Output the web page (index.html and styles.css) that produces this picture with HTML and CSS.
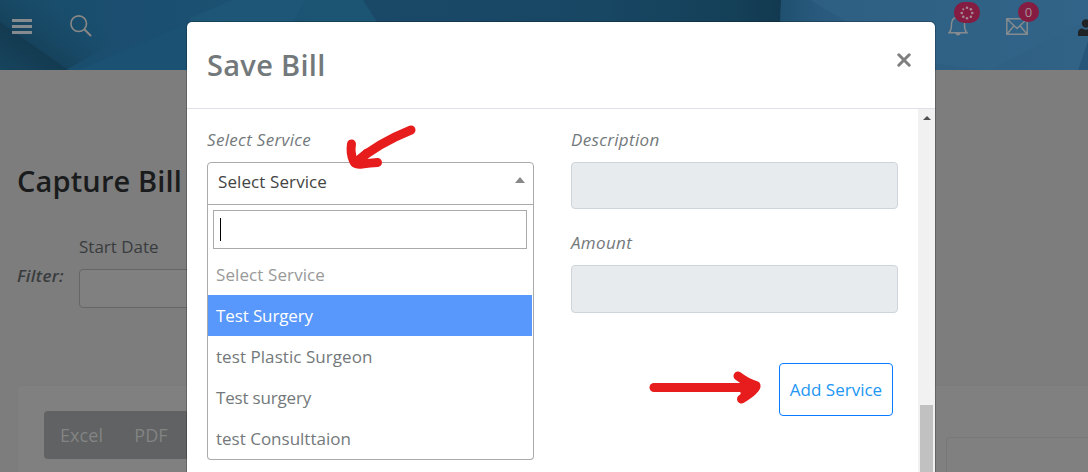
FILE: index.html
```html
<!DOCTYPE html>
<html lang="en">
<head>
<meta charset="utf-8">
<title>Capture Bill</title>
<link rel="stylesheet" href="styles.css">
</head>
<body>
<div class="page">
  <header class="topbar">
    <svg class="topbar-art" viewBox="0 0 1088 70" preserveAspectRatio="none" aria-hidden="true">
      <defs>
        <linearGradient id="base" x1="0" x2="1" y1="0" y2="0">
          <stop offset="0" stop-color="#184d69"/><stop offset=".12" stop-color="#1b4e70"/><stop offset=".3" stop-color="#1c5474"/>
        </linearGradient>
        <linearGradient id="fold" gradientUnits="userSpaceOnUse" x1="32" y1="44" x2="8" y2="80">
          <stop offset="0" stop-color="#133a50"/><stop offset="1" stop-color="#17465f"/>
        </linearGradient>
        <linearGradient id="soft" gradientUnits="userSpaceOnUse" x1="32" y1="44" x2="64" y2="0">
          <stop offset="0" stop-color="#153f58" stop-opacity=".8"/><stop offset="1" stop-color="#184d69" stop-opacity="0"/>
        </linearGradient>
        <linearGradient id="mid" x1="0" x2="1" y1="0" y2="0">
          <stop offset="0" stop-color="#1a4867"/><stop offset=".55" stop-color="#184764"/><stop offset=".9" stop-color="#143f57"/><stop offset="1" stop-color="#123950"/>
        </linearGradient>
        <linearGradient id="right" x1="0" x2="1" y1="0" y2="0">
          <stop offset="0" stop-color="#20506f"/><stop offset=".15" stop-color="#2a5b7f"/><stop offset="1" stop-color="#316387"/>
        </linearGradient>
      </defs>
      <rect width="1088" height="70" fill="url(#base)"/>
      <path d="M0 0H190L66 70L0 22Z" fill="url(#soft)"/>
      <path d="M0 22L68 70H0Z" fill="url(#fold)"/>
      <path d="M80 70L190 22V70Z" fill="#1b5273"/>
      <path d="M190 18L232 0H306L285 35H187Z" fill="#1e5877" opacity=".7"/>
      <path d="M363 0H781L779 70H407Z" fill="url(#mid)"/>
      <path d="M781 0H1088V70H779Z" fill="url(#right)"/>
      <path d="M810 0H1088V20L990 70L935 64L850 24Z" fill="#32658a" opacity=".45"/>
      <path d="M1088 41V70H1078Z" fill="#26577a"/>
    </svg>
    <div class="topbar-content">
      <svg class="menu-icon" viewBox="0 0 20 15"><path d="M0 1.5H20M0 7.5H20M0 13.5H20" stroke="#858b8e" stroke-width="3"/></svg>
      <svg class="search-icon" viewBox="0 0 22 22"><g fill="none" stroke="#8a8886" stroke-width="1.6"><circle cx="8.7" cy="8.7" r="7.8"/><path d="M14 14L21 21" stroke-width="2"/></g></svg>
      <span class="spacer"></span>
      <div class="notice bell">
        <svg viewBox="0 0 20 20"><path d="M1 16.8C4 14 3.3 11 3.5 7.5C3.8 3.5 6.4 1.2 10 1.2S16.2 3.5 16.5 7.5C16.7 11 16 14 19 16.8Z" fill="none" stroke="#858b8e" stroke-width="1.5"/><path d="M7.2 17H12.8Q12 19.6 10 19.6T7.2 17" fill="#858b8e"/></svg>
        <span class="badge wide"><svg viewBox="0 0 16 16"><g fill="#a68791"><circle cx="8" cy="2" r="1.5"/><circle cx="12.4" cy="3.8" r="1.5"/><circle cx="14" cy="8" r="1.5"/><circle cx="12.4" cy="12.3" r="1.5"/><circle cx="8" cy="14" r="1.5"/><circle cx="3.7" cy="12.3" r="1.5"/><circle cx="2" cy="8" r="1.5"/><circle cx="3.7" cy="3.8" r="1.2"/></g></svg></span>
      </div>
      <div class="notice mail">
        <svg viewBox="0 0 22 17"><path d="M.8 .8H21.2V16.2H.8ZM1 1L11 10.5L21 1M1 16L8 7.7M21 16L14 7.7" fill="none" stroke="#858b8e" stroke-width="1.5"/></svg>
        <span class="badge">0</span>
      </div>
      <svg class="user-icon" viewBox="0 0 16 18"><circle cx="8" cy="4.5" r="4.2" fill="#202326"/><path d="M0 17V14Q0 9.5 4.5 9.5Q8 12 11.5 9.5Q16 9.5 16 14V17Z" fill="#202326"/></svg>
    </div>
  </header>
  <main class="content">
    <h1 class="page-title">Capture Bill</h1>
    <div class="filters">
      <span class="filter-label">Filter:</span>
      <div class="date-field"><label>Start Date</label><div class="date-input"></div></div>
    </div>
    <div class="cards">
      <section class="card table-card"><div class="export-group"><span>Excel</span><span>PDF</span></div></section>
      <section class="card side-card"><div class="side-inner"></div></section>
    </div>
  </main>
</div>

<section class="modal" role="dialog">
  <header class="modal-header">
    <h2>Save Bill</h2>
    <svg class="close" viewBox="0 0 14 14"><path d="M1.8 1.8L12.2 12.2M12.2 1.8L1.8 12.2" stroke="#7f7f7f" stroke-width="3" stroke-linecap="round"/></svg>
  </header>
  <div class="modal-main">
    <div class="modal-body">
      <div class="column">
        <label class="label">Select Service</label>
        <div class="select"><span>Select Service</span><i class="caret"></i></div>
        <div class="dropdown">
          <div class="search"><i class="cursor"></i></div>
          <div class="option placeholder">Select Service</div>
          <div class="option active">Test Surgery</div>
          <div class="option plastic">test Plastic Surgeon</div>
          <div class="option lower">Test surgery</div>
          <div class="option">test Consulttaion</div>
        </div>
      </div>
      <div class="column">
        <label class="label">Description</label>
        <div class="readonly"></div>
        <label class="label second">Amount</label>
        <div class="readonly amount"></div>
        <button class="add">Add Service</button>
      </div>
    </div>
    <div class="scrollbar"><i class="scroll-up"></i><i class="thumb"></i></div>
  </div>
</section>

<svg class="annotations" viewBox="0 0 1088 472" aria-hidden="true">
  <g fill="none" stroke="#e71c1c" stroke-linecap="round" stroke-linejoin="round">
    <path d="M411 130C391 138 371 149 355 163" stroke-width="9"/>
    <path d="M351.500 144Q350 153 353.500 161Q355 165 362 164Q370 163 377.500 162.500" stroke-width="9"/>
    <path d="M354 163L366 152L358 164" stroke-width="6"/>
    <path d="M654 387.500H755" stroke-width="9"/>
    <path d="M738 376Q747 383 756 385.500Q757 389 741.500 399" stroke-width="9"/>
    <path d="M743 383L752 388L743 393" stroke-width="5"/>
  </g>
</svg>
</body>
</html>
```

FILE: styles.css
```css
* { box-sizing: border-box; }
body { margin: 0; width: 1088px; height: 472px; overflow: hidden; position: relative; font-family: "Open Sans", "Noto Sans", sans-serif; font-size: 17px; color: #73797b; }
.page { height: 472px; background: #7d7d7d; display: flex; flex-direction: column; overflow: hidden; }
.topbar { height: 70px; flex: none; position: relative; }
.topbar-art { position: absolute; inset: 0; width: 100%; height: 100%; }
.topbar-content { position: relative; display: flex; height: 70px; padding-left: 12px; overflow: hidden; }
.menu-icon { width: 20px; height: 15px; margin-top: 19px; }
.search-icon { width: 22px; height: 22px; margin: 15px 0 0 38px; }
.spacer { flex: 1; }
.notice { position: relative; flex: none; }
.bell { width: 20px; margin: 16px 38px 0 0; }
.bell > svg { width: 20px; height: 20px; }
.mail { width: 22px; margin: 17px 50px 0 0; }
.mail > svg { width: 22px; height: 17px; }
.badge { position: absolute; left: 12px; top: -15px; width: 21px; height: 20px; border-radius: 10px; background: #851c42; color: #a69299; font-size: 13px; line-height: 20px; text-align: center; }
.badge.wide { width: 26px; height: 21px; left: 6px; top: -14px; display: flex; align-items: center; justify-content: center; }
.badge svg { width: 14px; height: 14px; }
.user-icon { width: 16px; height: 18px; margin: 19px -6px 0 0; flex: none; }
.content { flex: 1; display: flex; flex-direction: column; min-height: 0; }
.page-title { margin: 91px 0 0 17px; font-size: 29px; line-height: 40px; height: 40px; font-weight: 600; letter-spacing: .15px; color: #1a1b1c; white-space: nowrap; }
.filters { display: flex; margin: 34px 0 0 17px; gap: 15px; height: 73px; }
.filter-label { width: 47px; padding-top: 29px; font-weight: 600; font-style: italic; line-height: 24px; color: #393c3e; letter-spacing: .3px; }
.date-field { width: 250px; }
.date-field label { display: block; line-height: 24px; height: 34px; color: #393c3e; }
.date-input { height: 39px; border: 1px solid #656668; border-radius: 4px; background: #808080; }
.cards { display: flex; margin: 77px 0 0 18px; flex: 1; min-height: 0; }
.card { background: #808080; border-top: 1px solid #7a7b7b; }
.table-card { width: 855px; padding: 25px 0 0 26px; }
.export-group { display: flex; gap: 31px; padding-left: 16px; width: 250px; height: 48px; line-height: 49px; background: #606263; border-radius: 4px; color: #838484; font-size: 18px; letter-spacing: .1px; }
.side-card { flex: 1; padding: 51px 0 0 73px; }
.side-inner { height: 35px; border: 1px solid #777878; border-right: 0; border-bottom: 0; border-radius: 4px 0 0; }
.modal { position: absolute; left: 187px; top: 22px; width: 748px; height: 450px; background: #fff; border-radius: 5px 5px 0 0; box-shadow: 0 0 0 1px rgba(0,0,0,.22); display: flex; flex-direction: column; overflow: hidden; }
.modal-header { height: 87px; flex: none; display: flex; justify-content: space-between; padding: 0 24px 0 20px; border-bottom: 1px solid #dee2e6; }
.modal h2 { margin: 23px 0 0; font-size: 29px; line-height: 40px; font-weight: 600; color: #73797b; letter-spacing: .3px; }
.close { width: 14px; height: 14px; margin-top: 31px; }
.modal-main { display: flex; flex: 1; min-height: 0; }
.modal-body { flex: 1; display: flex; gap: 37px; padding: 19px 20px 0; }
.column { width: 327px; display: flex; flex-direction: column; }
.label { line-height: 24px; height: 34px; font-style: italic; white-space: nowrap; letter-spacing: .33px; }
.select { height: 43px; border: 1px solid #aaa; border-radius: 4px 4px 0 0; padding: 7px 8px 0 10px; display: flex; justify-content: space-between; line-height: 24px; color: #444; letter-spacing: .1px; }
.caret { border: 5px solid transparent; border-top: 0; border-bottom: 6px solid #888; height: 6px; margin-top: 7px; }
.dropdown { height: 256px; border: 1px solid #aaa; border-top: 0; margin-top: -1px; padding-top: 6px; border-radius: 0 0 4px 4px; }
.search { height: 39px; margin: 0 6px 5px 5px; border: 1px solid #aaa; padding: 7px 6px; }
.cursor { display: block; width: 1px; height: 23px; background: #000; }
.option { height: 41px; line-height: 41px; padding-left: 8px; margin-right: 1px; color: #73797b; }
.placeholder { color: #999; letter-spacing: .1px; }
.active { background: #5897fb; color: #fff; letter-spacing: -.12px; }
.plastic { letter-spacing: .06px; }
.lower { letter-spacing: -.18px; }
.readonly { height: 47px; flex: none; border: 1px solid #ced4da; border-radius: 4px; background: #e7ebee; }
.second { margin-top: 22px; }
.amount { height: 48px; }
.add { align-self: flex-end; margin: 50px 5px 0 0; width: 114px; height: 53px; padding: 0; border: 1px solid #087cff; border-radius: 4px; background: #fff; color: #2196f3; font: 17px "Open Sans", sans-serif; white-space: nowrap; }
.scrollbar { width: 17px; background: #f1f1f1; display: flex; flex-direction: column; align-items: center; }
.scroll-up { border: 4px solid transparent; border-top: 0; border-bottom-color: #505050; margin-top: 7px; }
.thumb { width: 13px; flex: 1; margin-top: 285px; background: #c1c1c1; }
.annotations { position: absolute; inset: 0; width: 1088px; height: 472px; pointer-events: none; }
```
